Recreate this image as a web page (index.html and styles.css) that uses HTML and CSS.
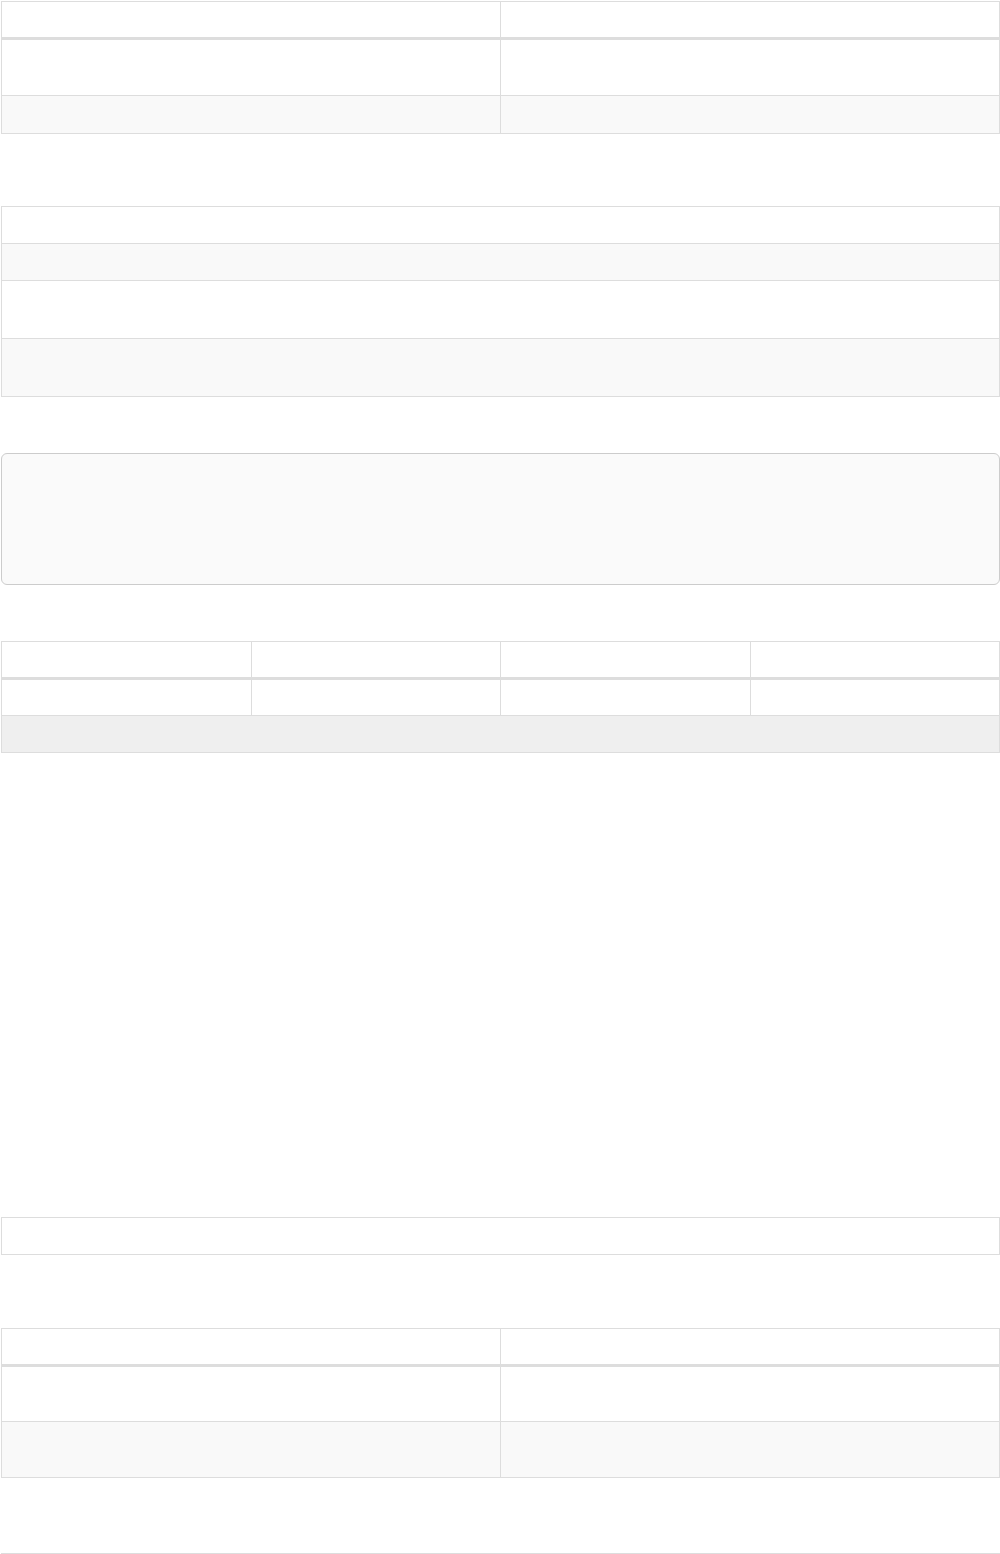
FILE: index.html
```html
<!DOCTYPE html>
<html>

<head>
  <meta charset='utf-8'>
  <title>Tables</title>
  <meta name='viewport' content='width=device-width, initial-scale=1'>
  <link rel="stylesheet" href="styles.css">
</head>

<body>
  <div class="page">
    <table class="grid gap-after-1">
      <thead>
        <tr class="row-head"><th></th><th></th></tr>
      </thead>
      <tbody>
        <tr class="row-tall"><td></td><td></td></tr>
        <tr class="row striped"><td></td><td></td></tr>
      </tbody>
    </table>

    <table class="grid gap-after-2">
      <tbody>
        <tr class="row-short"><td></td></tr>
        <tr class="row-short striped"><td></td></tr>
        <tr class="row-wide"><td></td></tr>
        <tr class="row-wide striped"><td></td></tr>
      </tbody>
    </table>

    <div class="well"></div>

    <table class="grid gap-after-3">
      <thead>
        <tr class="row-head"><th></th><th></th><th></th><th></th></tr>
      </thead>
      <tbody>
        <tr class="row-mid"><td></td><td></td><td></td><td></td></tr>
      </tbody>
      <tfoot>
        <tr class="row-foot"><td colspan="4"></td></tr>
      </tfoot>
    </table>

    <table class="grid gap-after-4">
      <tbody>
        <tr class="row-short"><td></td></tr>
      </tbody>
    </table>

    <table class="grid gap-after-5">
      <thead>
        <tr class="row-head"><th></th><th></th></tr>
      </thead>
      <tbody>
        <tr class="row-tall-b"><td></td><td></td></tr>
        <tr class="row-tall striped"><td></td><td></td></tr>
      </tbody>
    </table>

    <div class="rule"></div>
  </div>
</body>

</html>
```

FILE: styles.css
```css
* {
  box-sizing: border-box;
  margin: 0;
  padding: 0;
  font-family: "Liberation Sans", Arial, sans-serif;
}

body {
  background-color: #fff;
  color: #333;
  font-size: 13px;
}

.page {
  padding: 1px 0 0 1px;
}

.grid {
  width: 100%;
  border-collapse: separate;
  border-spacing: 0;
  border-top: 1px solid #ddd;
  border-left: 1px solid #ddd;
  table-layout: fixed;
}

th,
td {
  border-right: 1px solid #ddd;
  border-bottom: 1px solid #ddd;
  padding: 0;
}

th {
  border-bottom: 3px solid #ddd;
}

.row-head th {
  height: 38px;
}

.row td {
  height: 38px;
}

.row-short td {
  height: 37px;
}

.row-mid td {
  height: 36px;
}

.row-foot td {
  height: 37px;
  background-color: #efefef;
}

.row-tall td {
  height: 56px;
}

.row-tall-b td {
  height: 55px;
}

.row-wide td {
  height: 58px;
}

.striped td {
  background-color: #f9f9f9;
}

.gap-after-1 {
  margin-bottom: 72px;
}

.gap-after-2 {
  margin-bottom: 56px;
}

.gap-after-3 {
  margin-bottom: 464px;
}

.gap-after-4 {
  margin-bottom: 73px;
}

.gap-after-5 {
  margin-bottom: 75px;
}

.well {
  height: 132px;
  margin-bottom: 56px;
  background-color: #fafafa;
  border: 1px solid #ccc;
  border-radius: 6px;
}

.rule {
  border-top: 1px solid #ddd;
  height: 1px;
}
```
